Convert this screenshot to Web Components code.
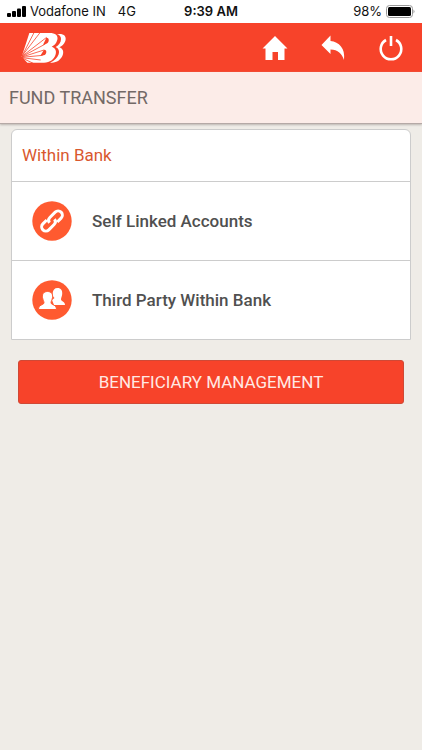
<!DOCTYPE html>
<html lang="en">
<head>
<meta charset="utf-8">
<meta name="viewport" content="width=device-width, initial-scale=1">
<title>Fund Transfer</title>
<style>
body {
    margin: 0;
    min-height: 100vh;
    background: #efece7;
    font-family: Roboto, "Noto Sans", sans-serif;
}
</style>
</head>
<body>
<bank-status-bar carrier="Vodafone IN" network="4G" time="9:39 AM" battery="98%"></bank-status-bar>
<bank-header></bank-header>
<bank-title>FUND TRANSFER</bank-title>
<main>
    <bank-card>
        <span slot="heading">Within Bank</span>
        <bank-option icon="link">Self Linked Accounts</bank-option>
        <bank-option icon="people">Third Party Within Bank</bank-option>
    </bank-card>
    <bank-button>BENEFICIARY MANAGEMENT</bank-button>
</main>

<script>
class BankStatusBar extends HTMLElement {
    constructor() {
        super();
        const shadowRoot = this.attachShadow({ mode: 'open' });
        const attr = name => this.getAttribute(name) || '';
        shadowRoot.innerHTML = `
            <style>
            :host {
                display: grid;
                grid-template-columns: 1fr auto 1fr;
                align-items: center;
                height: 23px;
                padding: 0 7px;
                background: #fff;
                color: #111;
                font: 13px/23px Inter, sans-serif;
            }
            div {
                display: flex;
                align-items: center;
                gap: 4px;
            }
            .network {
                margin-left: 8px;
            }
            .end {
                justify-content: flex-end;
            }
            b {
                font-weight: 600;
            }
            svg {
                display: block;
            }
            </style>
            <div>
                <svg width="19" height="11" viewBox="0 0 19 11" aria-hidden="true">
                    <rect x="0" y="7" width="4" height="4" rx="1"/>
                    <rect x="5" y="5" width="4" height="6" rx="1"/>
                    <rect x="10" y="2.500" width="4" height="8.500" rx="1"/>
                    <rect x="15" y="0" width="4" height="11" rx="1"/>
                </svg>
                <span>${attr('carrier')}</span>
                <span class="network">${attr('network')}</span>
            </div>
            <b>${attr('time')}</b>
            <div class="end">
                <span>${attr('battery')}</span>
                <svg width="29" height="13" viewBox="0 0 29 13" aria-hidden="true">
                    <rect x="0.500" y="0.500" width="26" height="12" rx="3" fill="#fff" stroke="#999"/>
                    <rect x="2" y="2" width="23" height="9" rx="1.500"/>
                    <path d="M27.500 4.500q2 2 0 4z" fill="#999"/>
                </svg>
            </div>
        `;
    }
}

class BankHeader extends HTMLElement {
    constructor() {
        super();
        const shadowRoot = this.attachShadow({ mode: 'open' });
        shadowRoot.innerHTML = `
            <style>
            :host {
                display: block;
                background: #f7432a;
            }
            header {
                display: flex;
                align-items: center;
                justify-content: space-between;
                height: 49px;
                padding: 0 17px 0 20px;
            }
            nav {
                display: flex;
                gap: 30px;
            }
            button {
                display: grid;
                place-items: center;
                width: 28px;
                height: 32px;
                padding: 0;
                border: 0;
                background: none;
                color: #fff;
            }
            svg {
                display: block;
            }
            </style>
            <header>
                <svg width="48" height="36" viewBox="0 0 144 108" role="img" aria-label="Bank logo">
                    <path fill="#fff" d="M28 9H88C107 9 115 17 112 29C109 40 103 46 95 50C106 54 110 62 107 73C102 89 90 98 72 98H22L5 80Z"/>
                    <path fill="#fff" d="M111 12H118C133 12 140 20 136 33C132 43 126 48 118 52C129 56 132 65 128 76C122 90 111 98 96 98H90C104 92 112 84 116 73C119 63 116 55 107 51C117 45 123 38 123 27C123 20 119 15 111 12Z"/>
                    <path fill="#f7432a" d="M79 23C90 23 88 39 77 42L69 45ZM72 59C82 58 81 73 71 76L61 77Z"/>
                    <g stroke="#f7432a" fill="none" stroke-width="2.400">
                        <path d="M6 78L42 8M6 78L60 8M6 79L80 22M6 80L76 42"/>
                        <path d="M6 81L72 60M6 82L68 76M6 83L62 90M6 84L40 100"/>
                    </g>
                </svg>
                <nav>
                    <button type="button" aria-label="Home">
                        <svg width="26" height="26" viewBox="0 0 26 26" fill="currentColor">
                            <path d="M13 1L25.500 13.500H22.500V25H16V17H10.500V25H3.500V13.500H0.500Z"/>
                        </svg>
                    </button>
                    <button type="button" aria-label="Back">
                        <svg width="26" height="26" viewBox="0 0 26 26" fill="currentColor">
                            <path d="M10.500 0.500V6C19 7 25.500 13 24 25C22 19 18 14.500 10.500 14.500V19L1.500 10Z"/>
                        </svg>
                    </button>
                    <button type="button" aria-label="Log out">
                        <svg width="26" height="26" viewBox="0 0 26 26" fill="none" stroke="currentColor" stroke-width="2.600">
                            <path d="M8 5A10.300 10.300 0 1 0 18 5M13 1V11"/>
                        </svg>
                    </button>
                </nav>
            </header>
        `;
    }
}

class BankTitle extends HTMLElement {
    constructor() {
        super();
        const shadowRoot = this.attachShadow({ mode: 'open' });
        shadowRoot.innerHTML = `
            <style>
            :host {
                display: block;
                background: #fcece8;
                border-bottom: 1px solid #b5a9a6;
                box-shadow: 0 1px 2px #bbb5b0;
            }
            h1 {
                margin: 0;
                padding: 0 9px;
                color: #736966;
                font-size: 18px;
                font-weight: 400;
                line-height: 51px;
            }
            </style>
            <h1><slot></slot></h1>
        `;
    }
}

class BankCard extends HTMLElement {
    constructor() {
        super();
        const shadowRoot = this.attachShadow({ mode: 'open' });
        shadowRoot.innerHTML = `
            <style>
            :host {
                display: block;
                margin: 5px 11px 20px;
                border: 1px solid #ccc;
                border-radius: 6px 6px 0 0;
                background: #fff;
            }
            h2 {
                margin: 0;
                padding: 0 10px;
                color: #d9582f;
                font-size: 17px;
                font-weight: 400;
                line-height: 51px;
            }
            </style>
            <h2><slot name="heading"></slot></h2>
            <slot></slot>
        `;
    }
}

const optionIcons = {
    link: `
        <g transform="rotate(-45 20 20)" fill="none" stroke="#fff" stroke-width="3">
            <path d="M23 20.500A4 4 0 0 1 19 24H11.500A4.200 4.200 0 0 1 11.500 15.600H17"/>
            <path d="M17 19.500A4 4 0 0 1 21 16H28.500A4.200 4.200 0 0 1 28.500 24.400H23"/>
        </g>`,
    people: `
        <path fill="#fff" d="M25.500 8C29 8 30.500 10.500 30.200 14C30 16.500 29 17.500 29 19.500C29.500 21.500 33 21.500 33 25H22L20 20L22.500 18C21 17 20.500 15 20.700 13C21 10 22.500 8 25.500 8Z"/>
        <path fill="#fff" stroke="#ff5a30" stroke-width="1" d="M15.500 11.500C19.500 11.500 21 14 20.500 17.500C20.200 20 19 21 19 23C19.500 25 24.500 24.500 24.500 29.500H6.500C6.500 24.500 11.500 25 12 23C12 21 10.800 20 10.500 17.500C10 14 11.500 11.500 15.500 11.500Z"/>`
};

class BankOption extends HTMLElement {
    constructor() {
        super();
        const shadowRoot = this.attachShadow({ mode: 'open' });
        shadowRoot.innerHTML = `
            <style>
            :host {
                display: block;
                border-top: 1px solid #ccc;
            }
            a {
                display: flex;
                align-items: center;
                gap: 20px;
                height: 78px;
                padding: 0 20px;
                color: #505050;
                font-size: 17px;
                font-weight: 500;
                text-decoration: none;
            }
            svg {
                flex: none;
            }
            </style>
            <a href="#">
                <svg width="40" height="40" viewBox="0 0 40 40" aria-hidden="true">
                    <circle cx="20" cy="20" r="19.700" fill="#ff5a30"/>
                    ${optionIcons[this.getAttribute('icon')] || ''}
                </svg>
                <slot></slot>
            </a>
        `;
    }
}

class BankButton extends HTMLElement {
    constructor() {
        super();
        const shadowRoot = this.attachShadow({ mode: 'open' });
        shadowRoot.innerHTML = `
            <style>
            :host {
                display: block;
                margin: 0 18px;
            }
            button {
                display: block;
                width: 100%;
                height: 44px;
                padding: 0;
                border: 1px solid #cf4936;
                border-radius: 3px;
                background: #f7432a;
                color: #ffe9e4;
                font: inherit;
                font-size: 17px;
            }
            </style>
            <button type="button"><slot></slot></button>
        `;
    }
}

customElements.define('bank-status-bar', BankStatusBar);
customElements.define('bank-header', BankHeader);
customElements.define('bank-title', BankTitle);
customElements.define('bank-card', BankCard);
customElements.define('bank-option', BankOption);
customElements.define('bank-button', BankButton);
</script>
</body>
</html>
